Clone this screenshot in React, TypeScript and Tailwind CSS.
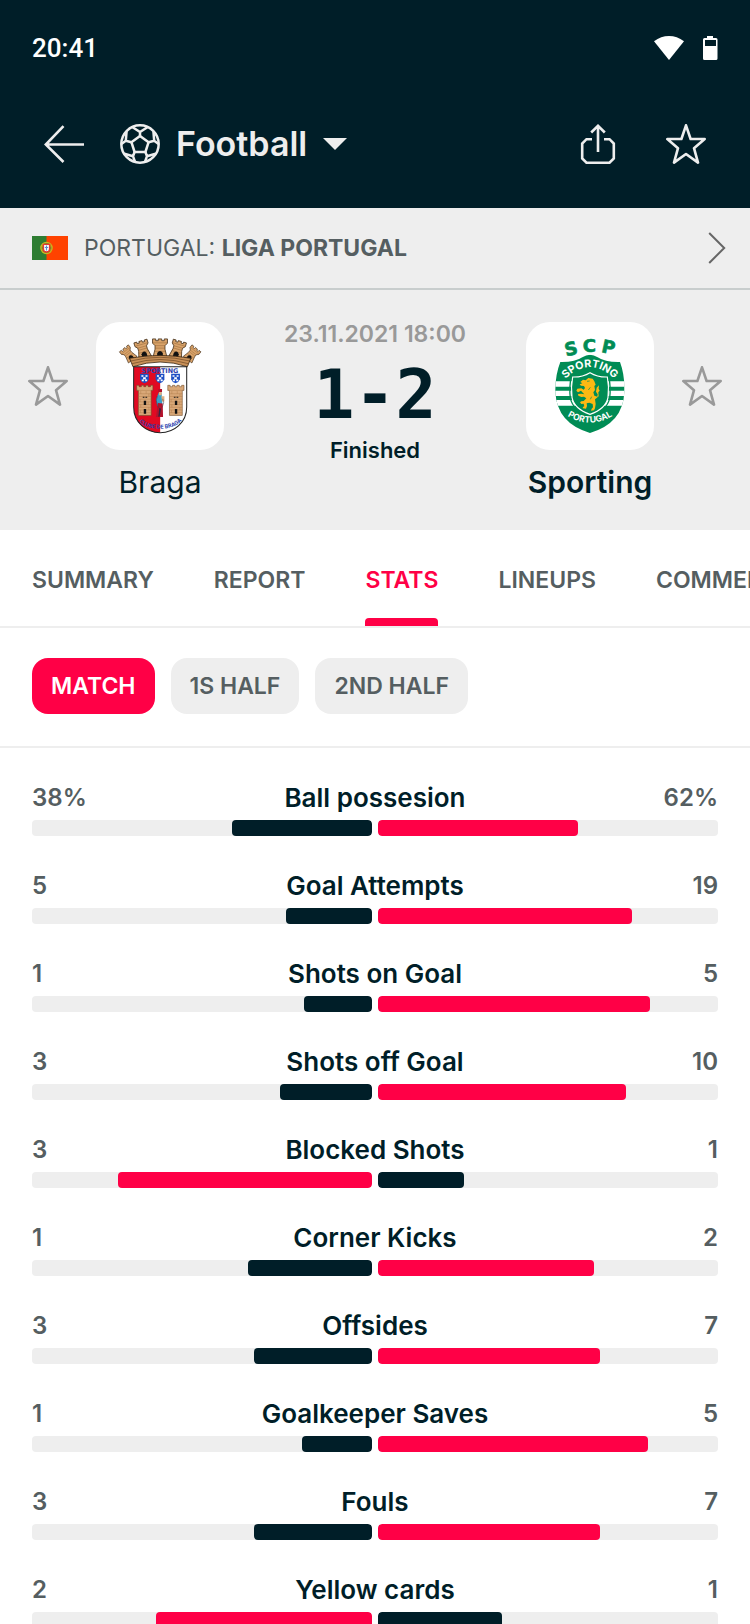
import type { ReactNode } from "react";

type Stat = { label: string; home: string; away: string; homeShare: number; leader: "home" | "away" };

const STATS: Stat[] = [
  { label: "Ball possesion", home: "38%", away: "62%", homeShare: 0.412, leader: "away" },
  { label: "Goal Attempts", home: "5", away: "19", homeShare: 0.253, leader: "away" },
  { label: "Shots on Goal", home: "1", away: "5", homeShare: 0.2, leader: "away" },
  { label: "Shots off Goal", home: "3", away: "10", homeShare: 0.271, leader: "away" },
  { label: "Blocked Shots", home: "3", away: "1", homeShare: 0.747, leader: "home" },
  { label: "Corner Kicks", home: "1", away: "2", homeShare: 0.365, leader: "away" },
  { label: "Offsides", home: "3", away: "7", homeShare: 0.347, leader: "away" },
  { label: "Goalkeeper Saves", home: "1", away: "5", homeShare: 0.206, leader: "away" },
  { label: "Fouls", home: "3", away: "7", homeShare: 0.347, leader: "away" },
  { label: "Yellow cards", home: "2", away: "1", homeShare: 0.635, leader: "home" },
];

const TABS = ["SUMMARY", "REPORT", "STATS", "LINEUPS", "COMMENTARY"];
const PERIODS = ["MATCH", "1S HALF", "2ND HALF"];

function StarIcon() {
  return (
    <svg viewBox="0 0 40 40" className="size-10" fill="none" stroke="currentColor" strokeWidth="2.6" strokeLinejoin="round" aria-hidden="true">
      <path d="M20 1.3 24.6 15H38.700L28 24.2 32 38.600 20 30 8 38.600 12 24.2 1.3 15H15.4Z" />
    </svg>
  );
}

function FootballIcon() {
  return (
    <svg viewBox="0 0 40 40" className="size-10" fill="none" stroke="currentColor" strokeWidth="2.5" strokeLinejoin="round" aria-hidden="true">
      <circle cx="20" cy="20" r="18.7" />
      <path d="M20 12 28.6 18.2 25.4 28H14.6L11.4 18.2Z" />
      <path d="M20 12V8M20 8 12.600 3.2M20 8 27.400 3.2" />
      <path d="M28.6 18.2 34.2 16.8M34.2 16.8 33.4 7.2M34.2 16.8 38.6 20M11.4 18.2 5.8 16.8M5.8 16.8 6.6 7.2M5.8 16.8 1.4 20" />
      <path d="M25.4 28 27 32.2M27 32.2 25 38M27 32.2 35.6 29.8M14.6 28 13 32.2M13 32.2 15 38M13 32.2 4.4 29.8" />
    </svg>
  );
}

function PortugalFlag() {
  return (
    <svg viewBox="0 0 36 24" className="h-6 w-9 shrink-0" role="img" aria-label="Portugal">
      <path fill="#ff4200" d="M0 0h36v24H0z" />
      <path fill="#2e7d32" d="M0 0h14.5v24H0z" />
      <circle cx="14.5" cy="12" r="5.6" fill="#6f8f24" stroke="#c8b820" strokeWidth="1.3" />
      <path d="M9.5 9.5l10 5M9.5 14.5l10-5" stroke="#e0a020" strokeWidth=".8" />
      <path fill="#fff" stroke="#e53935" strokeWidth="1.4" d="M11.4 8.4h6.2v4.500a3.1 3.1 0 0 1-6.2 0z" />
      <path d="M14.5 9.5v5M12.8 11.5h3.4" stroke="#5c8bd0" strokeWidth="1.2" />
    </svg>
  );
}

function Keep({ x }: { x: number }) {
  return (
    <g transform={`translate(${x} 285)`}>
      <path fill="#d9a878" stroke="#6b4522" strokeWidth="1.6" d="M-24 1h7v4h7V1h7v4h6V1h7v4h7V1h7v15h-5v74h-38V16h-5z" />
      <path stroke="#a97643" strokeWidth="1.2" d="M-24 16h43M-19 26h38M-19 34h38M-19 42h38M-19 50h38M-19 58h38M-19 66h38M-19 74h38M-19 82h38M-12 18v8M4 18v8M12 26v8M-14 42v8M10 50v8M-12 58v8M12 66v8M-13 74v8" />
      <path fill="#111" d="M-3 47h7v12h-7zM-3 71h7v14h-7zM-6 35h5v3h-5zM2 35h5v3H2z" />
    </g>
  );
}

function Quinas({ x }: { x: number }) {
  return (
    <g transform={`translate(${x} 252)`}>
      <path fill="#1d4fc4" d="M-13 0h26v16q-3 9-13 12q-10-3-13-12z" />
      <path fill="#fff" d="M-9 4h6v5h-6zM3 4h6v5H3zM-4 10h8v6h-8zM-8 17h6v5h-6zM2 17h6v5H2z" />
    </g>
  );
}

function Turret({ x, y, turn, scale }: { x: number; y: number; turn: number; scale: number }) {
  return (
    <g transform={`translate(${x} ${y}) rotate(${turn}) scale(${scale})`}>
      <path fill="#d9a36a" stroke="#3f2a14" strokeWidth="2.2" d="M-21-26h9v5h7v-5H5v5h7v-5h9v12l-7 7v10l6 24h-40l6-24V-7l-7-7z" />
      <path stroke="#8d6233" strokeWidth="1.4" d="M-20-15h40M-14-7h28M-14 0h28M-16 9h32" />
      <path fill="#111" d="M-8 26V14Q0 2 8 14v12z" />
    </g>
  );
}

function BragaCrest() {
  return (
    <svg viewBox="361 146 234 284" className="h-24 w-20 overflow-visible" role="img" aria-label="Braga crest">
      <defs>
        <clipPath id="braga-shield">
          <path d="M400 231H557V350C557 396 520 426 478.500 426C437 426 400 396 400 350Z" />
        </clipPath>
        <path id="braga-motto" d="M413 386C428 424 529 424 546 384" />
      </defs>
      <Turret x={384} y={193} turn={-38} scale={0.8} />
      <Turret x={573} y={193} turn={38} scale={0.8} />
      <Turret x={427} y={179} turn={-16} scale={0.96} />
      <Turret x={530} y={179} turn={16} scale={0.96} />
      <Turret x={478} y={176} turn={0} scale={1.05} />
      <path fill="#c89058" stroke="#3f2a14" strokeWidth="2.500" d="M388 206Q478 189 569 206L559 231Q478 203 398 231Z" />
      <path fill="none" stroke="#6b4522" strokeWidth="2" d="M391 214Q478 192 566 214M395 222Q478 197 562 222" />
      <g clipPath="url(#braga-shield)">
        <path fill="#fff" d="M400 230h158v198H400z" />
        <path fill="#e10a22" d="M400 230h78.500v198H400z" />
      </g>
      <path fill="none" stroke="#222" strokeWidth="3" d="M400 231H557V350C557 396 520 426 478.500 426C437 426 400 396 400 350Z" />
      <text x="478" y="249" textAnchor="middle" fill="#2c3fae" fontSize="19" fontWeight="700" fontFamily="DejaVu Sans, sans-serif">SPORTING</text>
      <Quinas x={432} />
      <Quinas x={478} />
      <Quinas x={524} />
      <Keep x={433} />
      <Keep x={525} />
      <path fill="#3aa0c8" d="M474 308q6-8 9 0l1 18 1 14-5 10-10-2-4-20z" />
      <path fill="#b3122c" d="M472 338l-6 42h21l-1-40zM473 297h11v9h-11z" />
      <path fill="#e0b080" d="M475 306h8v9h-8zM482 318h9v16h-7z" />
      <path fill="#3a2440" d="M476 352l-3 27h4l4-24z" />
      <path fill="none" stroke="#3a3040" strokeWidth="1.500" d="M470 318l-3 14 6 20M486 326l3 12-5 14" />
      <text fill="#2c3fae" fontSize="16" fontWeight="700" fontFamily="Inter, sans-serif">
        <textPath href="#braga-motto" startOffset="50%" textAnchor="middle">CLUBE DE BRAGA</textPath>
      </text>
    </svg>
  );
}

function SportingCrest() {
  return (
    <svg viewBox="540 142 210 288" className="h-24 w-[70px] overflow-visible" role="img" aria-label="Sporting crest">
      <defs>
        <clipPath id="scp-shield">
          <path d="M556 214Q600 215 622 200Q645 184 668 200Q690 215 735 214Q750 254 748 305Q744 398 645 427Q546 398 541 305Q540 254 556 214Z" />
        </clipPath>
        <path id="scp-top" d="M569 267Q645 192 721 267" />
        <path id="scp-bottom" d="M564 367Q645 425 726 367" />
      </defs>
      <text x="573 623 677" y="197 184 184" rotate="-12 0 12" fill="#008c55" stroke="#008c55" strokeWidth="2" fontSize="54" fontWeight="700" fontFamily="DejaVu Sans, sans-serif">SCP</text>
      <g clipPath="url(#scp-shield)">
        <path fill="#008c55" d="M538 180h214v250H538z" />
        <path fill="#fff" d="M538 272h214v16H538zM538 300h214v16H538zM538 328h214v17H538z" />
      </g>
      <path fill="none" stroke="#008c55" strokeWidth="4" d="M645 241Q668 255 701 254Q708 290 704 322Q697 359 645 376Q593 359 586 322Q582 290 589 254Q622 255 645 241Z" />
      <path fill="#008c55" stroke="#fff" strokeWidth="3.500" d="M645 246Q668 260 697 259Q703 290 699 320Q693 354 645 371Q597 354 591 320Q587 290 593 259Q622 260 645 246Z" />
      <path fill="#fdb913" d="M624 267l8 2 8-7 13 2 5 8 4 10-4 4 2 12-5 7 3 10 9 3 1-7-5-8 2-12 7-7-1 10 3 6-4 5 1 12-7 6-4 3 2 14-2 13-3 6-9 1 2-6 4-4-1-10-10-4-8 2 1 8-3 8-10-1 1-4 4-2-2-8-7 1-4-5 4-3 7-1 8-8-7-5-8 1-9-4-1-5 10-1 9 2-6-6-4-5-9 5-5-5 3-6 12-1 7 4 4-5-3-6-9-1-4-4 8-3-6-4z" />
      <path fill="none" stroke="#008c55" strokeWidth="2" d="M636 272l8-1M646 290l-6 8M650 318l-4 8" />
      <text fill="#fff" fontSize="32" fontWeight="700" fontFamily="Inter, sans-serif">
        <textPath href="#scp-top" startOffset="50%" textAnchor="middle">SPORTING</textPath>
      </text>
      <text fill="#fff" fontSize="26" fontWeight="700" fontFamily="Inter, sans-serif">
        <textPath href="#scp-bottom" startOffset="50%" textAnchor="middle">PORTUGAL</textPath>
      </text>
    </svg>
  );
}

function Team({ name, bold, children }: { name: string; bold?: boolean; children: ReactNode }) {
  return (
    <div className="flex w-32 flex-col items-center gap-3">
      <div className="flex size-32 items-center justify-center rounded-3xl bg-white">{children}</div>
      <span className={bold ? "text-3xl leading-10 font-semibold" : "text-3xl leading-10"}>{name}</span>
    </div>
  );
}

function StatRow({ stat }: { stat: Stat }) {
  const homeColor = stat.leader === "home" ? "bg-[#ff0046]" : "bg-[#001e28]";
  const awayColor = stat.leader === "away" ? "bg-[#ff0046]" : "bg-[#001e28]";
  return (
    <li className="flex flex-col gap-1.5">
      <div className="grid grid-cols-[1fr_auto_1fr] text-2xl leading-8 font-semibold text-[#555e61]">
        <span>{stat.home}</span>
        <span className="text-[26px] leading-8 text-[#001e28]">{stat.label}</span>
        <span className="text-right">{stat.away}</span>
      </div>
      <div className="grid grid-cols-2 gap-1.5">
        <div className="flex h-4 justify-end overflow-hidden rounded bg-[#eeeeee]">
          <div className={`rounded ${homeColor}`} style={{ width: `${stat.homeShare * 100}%` }} />
        </div>
        <div className="flex h-4 overflow-hidden rounded bg-[#eeeeee]">
          <div className={`rounded ${awayColor}`} style={{ width: `${(1 - stat.homeShare) * 100}%` }} />
        </div>
      </div>
    </li>
  );
}

export default function App() {
  return (
    <div className="flex h-screen flex-col overflow-hidden bg-white font-['Inter',sans-serif] text-[#001e28]">
      <header className="shrink-0 bg-[#001e28] pb-4 text-[#eeeeee]">
        <div className="flex h-24 items-center justify-between pr-[30px] pl-8 text-white">
          <span className="font-['Roboto',sans-serif] text-[26px] font-medium">20:41</span>
          <div className="flex items-center gap-[15px]">
            <svg viewBox="0 0 32 24" className="h-6 w-8" fill="currentColor" aria-hidden="true">
              <path d="M16 24 1 5.200Q8 0 16 0t15 5.200z" />
            </svg>
            <svg viewBox="0 0 20 24" className="h-6 w-5" fill="currentColor" fillRule="evenodd" aria-hidden="true">
              <path d="M7 0h6v2h3q1.500 0 1.500 1.500v19q0 1.500-1.500 1.500H4.500Q3 24 3 22.500v-19Q3 2 4.500 2H7zM5 4v6h11V4z" />
            </svg>
          </div>
        </div>
        <nav className="flex h-24 items-center justify-between px-11">
          <div className="flex items-center gap-9">
            <button type="button" aria-label="Back">
              <svg viewBox="0 0 40 40" className="size-10" fill="none" stroke="currentColor" strokeWidth="2.600" aria-hidden="true">
                <path d="M40 20.500H1.800M19.500 2.200 1.800 20.500 19.500 38" />
              </svg>
            </button>
            <button type="button" className="flex items-center gap-4">
              <FootballIcon />
              <span className="text-[34px] leading-10 font-semibold">Football</span>
              <svg viewBox="0 0 24 12" className="h-3 w-6" fill="currentColor" aria-hidden="true">
                <path d="M0 0h24L12 12z" />
              </svg>
            </button>
          </div>
          <div className="flex items-center gap-12">
            <button type="button" aria-label="Share">
              <svg viewBox="0 0 40 40" className="size-10" fill="none" stroke="currentColor" strokeWidth="2.600" aria-hidden="true">
                <path d="M20 28V2M13.200 8.500 20 1.800 26.800 8.500M14 15.200H8.500L4.200 19.500V34.500L8.500 38.700H31.500L35.800 34.500V19.500L31.500 15.200H26" />
              </svg>
            </button>
            <button type="button" aria-label="Add match to favourites">
              <StarIcon />
            </button>
          </div>
        </nav>
      </header>

      <a href="#league" className="flex h-[82px] shrink-0 items-center border-b-2 border-[#c8cdcd] bg-[#eeeeee] pr-6 pl-8 text-[23px] text-[#555e61]">
        <PortugalFlag />
        <span className="ml-4 grow">
          PORTUGAL: <b className="font-bold">LIGA PORTUGAL</b>
        </span>
        <svg viewBox="0 0 18 32" className="h-8 w-[18px]" fill="none" stroke="#666666" strokeWidth="2" aria-hidden="true">
          <path d="M1.200 1 16.200 16 1.200 31" />
        </svg>
      </a>

      <section className="flex h-60 shrink-0 items-start justify-between bg-[#eeeeee] px-7 pt-8">
        <div className="flex gap-7">
          <button type="button" aria-label="Add Braga to favourites" className="h-32 text-[#999999]">
            <StarIcon />
          </button>
          <Team name="Braga">
            <BragaCrest />
          </Team>
        </div>
        <div className="flex flex-col items-center">
          <time className="text-[23px] leading-6 font-semibold text-[#999999]">23.11.2021 18:00</time>
          <strong className="font-['DejaVu_Sans_Mono',monospace] text-[68px] leading-[98px] font-bold">1-2</strong>
          <span className="text-[22px] leading-3 font-semibold">Finished</span>
        </div>
        <div className="flex gap-7">
          <Team name="Sporting" bold>
            <SportingCrest />
          </Team>
          <button type="button" aria-label="Add Sporting to favourites" className="h-32 text-[#999999]">
            <StarIcon />
          </button>
        </div>
      </section>

      <nav className="flex h-[98px] shrink-0 gap-[60px] overflow-hidden border-b-2 border-[#eeeeee] px-8">
        {TABS.map((tab) => (
          <button
            key={tab}
            type="button"
            className={
              tab === "STATS"
                ? "flex flex-col items-center justify-between pt-8 text-[23px] leading-9 font-semibold text-[#ff0046]"
                : "flex flex-col items-center justify-between pt-8 text-[23px] leading-9 font-semibold text-[#555e61]"
            }
          >
            {tab}
            {tab === "STATS" && <span className="h-2 w-full rounded-t bg-[#ff0046]" />}
          </button>
        ))}
      </nav>

      <div className="flex h-[120px] shrink-0 items-start gap-4 border-b-2 border-[#eeeeee] px-8 pt-[30px]">
        {PERIODS.map((period) => (
          <button
            key={period}
            type="button"
            className={
              period === "MATCH"
                ? "h-14 rounded-2xl bg-[#ff0046] px-[19px] text-[23px] font-semibold text-white"
                : "h-14 rounded-2xl bg-[#eeeeee] px-[19px] text-[23px] font-semibold text-[#555e61]"
            }
          >
            {period}
          </button>
        ))}
      </div>

      <ul className="flex grow flex-col gap-[34px] overflow-hidden px-8 pt-[34px]">
        {STATS.map((stat) => (
          <StatRow key={stat.label} stat={stat} />
        ))}
      </ul>
    </div>
  );
}
